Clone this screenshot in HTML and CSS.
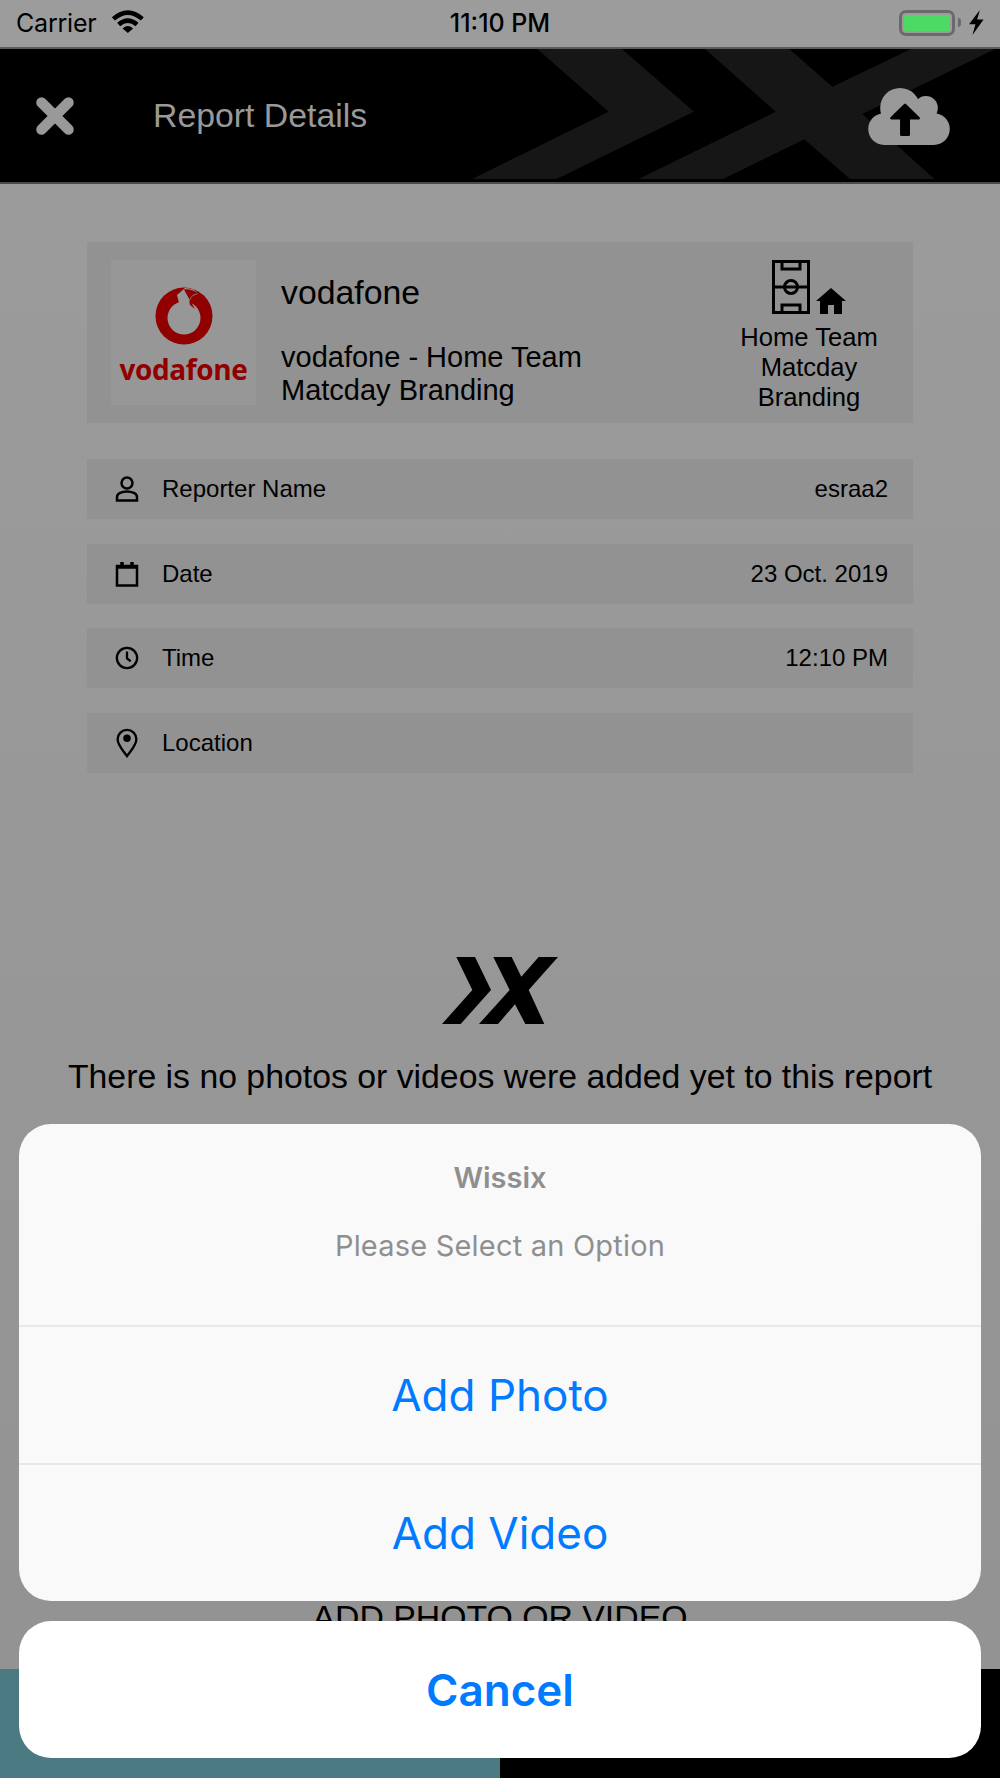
FILE: index.html
```html
<!DOCTYPE html>
<html lang="en">
<head>
<meta charset="utf-8">
<title>Report Details</title>
<link rel="stylesheet" href="styles.css">
</head>
<body>
<div class="screen">
  <div class="status">
    <div class="status-left">
      <span class="carrier">Carrier</span>
      <svg class="wifi" viewBox="362 38 103 70"><path class="wifi-arc" d="M369 65Q413 27 457 65"/><path class="wifi-arc" d="M385 82Q413 58 441 82"/><path class="wifi-dot" d="M397 94Q413 80 429 94L413 108Z"/></svg>
    </div>
    <span class="clock">11:10 PM</span>
    <div class="status-right">
      <div class="battery"><div class="battery-fill"></div></div>
      <div class="battery-nub"></div>
      <svg class="bolt" viewBox="520 38 44 74"><path d="M552 38L520 80H539L530 112L563 66H544Z"/></svg>
    </div>
  </div>
  <header class="header">
    <svg class="watermark" viewBox="0 27 1650 390"><path d="M262 27H516L732 215L320 417H66L476 215Z"/><path d="M765 27H1018L1147 140L1383 27H1635L1237 222L1453 417H1200L1063 298L820 417H566L977 215Z"/></svg>
    <svg class="close" viewBox="0 0 40 40"><path d="M6.500 6.500L33.500 33.500M33.500 6.500L6.500 33.500"/></svg>
    <h1 class="title">Report Details</h1>
    <svg class="cloud" viewBox="204 265 246 172"><circle cx="300" cy="325" r="60"/><circle cx="378" cy="325" r="36"/><circle cx="252" cy="389" r="48"/><circle cx="402" cy="389" r="48"/><rect x="252" y="340" width="150" height="97"/><path class="cloud-arrow" d="M315 316L274 356H304V406H326V356H356Z"/></svg>
  </header>
  <main class="content">
    <section class="card">
      <div class="logo-tile">
        <svg class="voda-mark" viewBox="0 0 58 58"><circle class="voda-ring" cx="29" cy="29" r="28.500"/><circle class="voda-hole" cx="29" cy="31" r="16.500"/><path class="voda-hole" d="M30 1C39 1 42 5 43 7C37 8 34 12 35 17L25 20L22 8Z"/><path class="voda-ring" d="M29 2.500C33 1.800 39 3 43 6.500C38 7 34.500 10 34.500 15.500C34.500 16.500 34.800 17.500 35.300 18.300L40 22C36 15 33 10 29 2.500Z"/></svg>
        <span class="voda-word">vodafone</span>
      </div>
      <div class="card-main">
        <div class="brand">vodafone</div>
        <div class="brand-sub">vodafone - Home Team<br>Matcday Branding</div>
      </div>
      <div class="card-side">
        <div class="side-icons">
          <svg class="pitch" viewBox="0 0 38 54"><path d="M1.500 1.500H36.500V52.500H1.500ZM1.500 27H36.500M10 1.500V9H28V1.500M10 52.500V45H28V52.500"/><circle cx="19" cy="27" r="6.500"/></svg>
          <svg class="house" viewBox="0 0 30 26"><path d="M15 0L30 13H26V26H18V17H12V26H4V13H0Z"/></svg>
        </div>
        <div class="side-text">Home Team<br>Matcday<br>Branding</div>
      </div>
    </section>
    <div class="row">
      <svg class="row-icon" viewBox="0 0 24 26"><circle cx="12" cy="7" r="5.500"/><path d="M2 24.500V21C2 17.500 7 15.500 12 15.500S22 17.500 22 21V24.500Z"/></svg>
      <span class="row-label">Reporter Name</span><span class="row-value">esraa2</span>
    </div>
    <div class="row">
      <svg class="row-icon" viewBox="0 0 24 26"><path d="M2 5H22V24.500H2Z"/><path class="thick" d="M2 6H22M7 1V5M17 1V5"/></svg>
      <span class="row-label">Date</span><span class="row-value">23 Oct. 2019</span>
    </div>
    <div class="row">
      <svg class="row-icon" viewBox="0 0 26 26"><circle cx="13" cy="13" r="11"/><path d="M13 6V13.500L17 16.500"/></svg>
      <span class="row-label">Time</span><span class="row-value">12:10 PM</span>
    </div>
    <div class="row">
      <svg class="row-icon row-icon-pin" viewBox="0 0 24 32"><path d="M12 30C7 23 2 18 2 12A10 10 0 0 1 22 12C22 18 17 23 12 30Z"/><circle class="pin-dot" cx="12" cy="11" r="4"/></svg>
      <span class="row-label">Location</span>
    </div>
    <div class="empty">
      <svg class="mark" viewBox="127 84 348 201"><path d="M170 84H226L274 183L183 285H127L218 183Z"/><path d="M281 84H336L365 143L417 84H475L387 183L434 285H377L346 226L295 285H238L330 183Z"/></svg>
      <p class="empty-text">There is no photos or videos were added yet to this report</p>
    </div>
  </main>
  <div class="add-bar">ADD PHOTO OR VIDEO</div>
  <div class="tabs"><div class="tab-teal"></div><div class="tab-black"></div></div>

  <div class="sheet-wrap">
    <div class="sheet">
      <div class="sheet-head">
        <div class="sheet-title">Wissix</div>
        <div class="sheet-msg">Please Select an Option</div>
      </div>
      <div class="sheet-btn">Add Photo</div>
      <div class="sheet-btn">Add Video</div>
    </div>
    <div class="cancel">Cancel</div>
  </div>
</div>
</body>
</html>
```
FILE: styles.css
```css
* { box-sizing: border-box; }
html, body { margin: 0; padding: 0; }
body { font-family: "Liberation Sans", Arial, sans-serif; color: #000; background: #9c9c9c; }
.screen { position: relative; width: 1000px; height: 1778px; overflow: hidden; display: flex; flex-direction: column; background: linear-gradient(#9c9c9c, #939393); }

.status { height: 49px; flex: none; background: #9c9c9c; border-bottom: 2px solid #5c5c5c; display: flex; align-items: center; justify-content: space-between; position: relative; padding: 0 16px 2px 16px; font-family: Inter, sans-serif; color: #000; }
.status-left { display: flex; align-items: center; gap: 14px; }
.carrier { font-size: 25px; letter-spacing: -0.2px; }
.wifi { width: 34px; height: 23px; margin-top: -3px; }
.wifi-arc { fill: none; stroke: #000; stroke-width: 14; }
.wifi-dot { fill: #000; }
.clock { position: absolute; left: 0; right: 0; text-align: center; font-size: 25px; font-weight: 500; }
.status-right { display: flex; align-items: center; }
.battery { width: 56px; height: 26px; border: 3px solid #6a6a6a; border-radius: 7px; padding: 2px; }
.battery-fill { height: 100%; background: #4cd964; border-radius: 2px; }
.battery-nub { width: 3px; height: 9px; margin-left: 3px; background: #6a6a6a; border-radius: 0 3px 3px 0; }
.bolt { width: 15px; height: 25px; margin-left: 8px; fill: #000; }

.header { position: relative; height: 135px; flex: none; background: #000; border-bottom: 2px solid #4a4a4a; display: flex; align-items: center; overflow: hidden; }
.watermark { position: absolute; left: 450px; top: 0; width: 550px; height: 130px; fill: #161616; }
.close { position: relative; width: 40px; height: 40px; margin: 0 0 0 35px; fill: none; stroke: #999; stroke-width: 10.500; stroke-linecap: round; flex: none; }
.title { position: relative; margin: -1px 0 0 78px; font-size: 33.800px; font-weight: 400; color: #999; }
.cloud { position: absolute; left: 868px; top: 39px; width: 82px; height: 57px; fill: #999; }
.cloud-arrow { fill: #000; stroke: #000; stroke-width: 8; stroke-linejoin: round; }

.content { flex: 1; padding: 58px 87px 0; display: flex; flex-direction: column; }
.card { height: 181px; background: #929292; display: flex; padding: 18px 0 0 24px; margin-bottom: 36px; }
.logo-tile { width: 145px; height: 145px; background: #979797; display: flex; flex-direction: column; align-items: center; padding-top: 27px; flex: none; }
.voda-mark { width: 58px; height: 58px; }
.voda-ring { fill: #900000; }
.voda-hole { fill: #979797; }
.voda-word { font-family: "Open Sans", sans-serif; font-weight: 700; font-size: 28px; line-height: 32px; letter-spacing: -0.4px; color: #900000; margin-top: 8px; }
.card-main { flex: 1; padding: 12px 0 0 25px; }
.brand { font-size: 33.800px; line-height: 40px; }
.brand-sub { margin-top: 29px; font-size: 29px; line-height: 33px; }
.card-side { width: 180px; margin-right: 14px; text-align: center; margin-top: -3px; flex: none; padding-right: 0; }
.side-icons { height: 56px; display: flex; align-items: flex-end; justify-content: center; gap: 6px; padding-right: 0; margin-top: 1px; }
.pitch { width: 38px; height: 54px; fill: none; stroke: #000; stroke-width: 3; }
.house { width: 30px; height: 26px; fill: #000; }
.side-text { font-size: 25.600px; line-height: 30px; margin-top: 8px; }

.row { height: 60px; background: #929292; display: flex; align-items: center; margin-bottom: 24.500px; padding: 0 25px 0 0; font-size: 24px; }
.row-icon { width: 24px; height: 26px; margin-left: 28px; fill: none; stroke: #000; stroke-width: 2.500; flex: none; }
.row-icon-pin { height: 30px; }
.thick { stroke-width: 3.500; }
.pin-dot { fill: #000; stroke: none; }
.row-label { margin-left: 23px; flex: 1; }
.row-value { text-align: right; }

.empty { display: flex; flex-direction: column; align-items: center; margin-top: 160px; }
.mark { width: 116px; height: 67px; fill: #000; }
.empty-text { margin: 32px -60px 0; font-size: 33.800px; line-height: 40px; white-space: nowrap; }

.add-bar { height: 109px; flex: none; background: #939393; text-align: center; font-size: 33.800px; padding-top: 38px; }
.tabs { height: 109px; flex: none; display: flex; }
.tab-teal { flex: 1; background: #4b7a83; }
.tab-black { flex: 1; background: #000; }

.sheet-wrap { position: absolute; left: 19px; right: 19px; top: 1124px; display: flex; flex-direction: column; gap: 20px; font-family: Inter, sans-serif; }
.sheet { background: #f9f9f9; border-radius: 32px; overflow: hidden; text-align: center; }
.sheet-head { height: 201px; padding-top: 35px; color: #8f8f8f; font-size: 29px; }
.sheet-title { font-weight: 600; line-height: 38px; }
.sheet-msg { margin-top: 30px; line-height: 38px; letter-spacing: 0.2px; }
.sheet-btn { height: 138px; border-top: 2px solid #e8e8e8; color: #007aff; font-size: 44px; display: flex; align-items: center; justify-content: center; }
.cancel { height: 137px; background: #fff; border-radius: 32px; color: #007aff; font-size: 44px; font-weight: 600; display: flex; align-items: center; justify-content: center; }
```
